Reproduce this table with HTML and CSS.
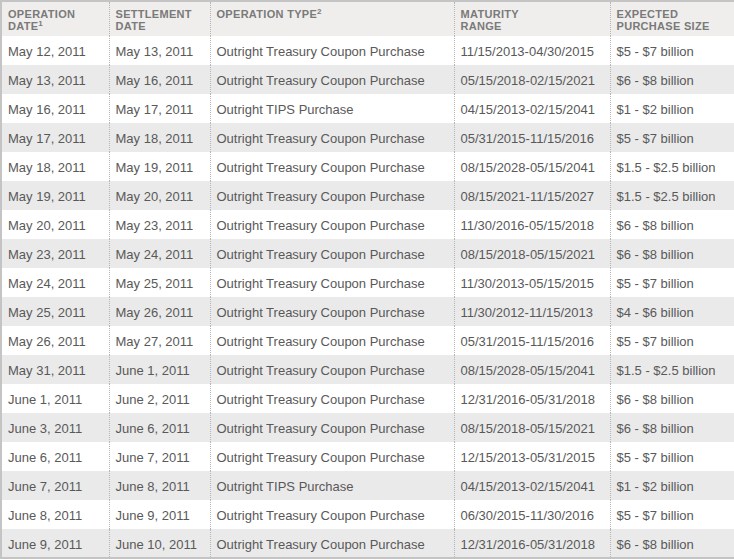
FILE: index.html
```html
<!DOCTYPE html>
<html>
<head>
<meta charset="utf-8">
<link rel="stylesheet" href="styles.css">
</head>
<body>
<table class="ops">
  <colgroup>
    <col class="c1"><col class="c2"><col class="c3"><col class="c4"><col class="c5">
  </colgroup>
  <thead>
    <tr>
      <th>Operation<br>Date<sup>1</sup></th>
      <th>Settlement<br>Date</th>
      <th>Operation Type<sup>2</sup></th>
      <th>Maturity<br>Range</th>
      <th>Expected<br>Purchase Size</th>
    </tr>
  </thead>
  <tbody>
    <tr><td>May 12, 2011</td><td>May 13, 2011</td><td>Outright Treasury Coupon Purchase</td><td>11/15/2013-04/30/2015</td><td>$5 - $7 billion</td></tr>
    <tr><td>May 13, 2011</td><td>May 16, 2011</td><td>Outright Treasury Coupon Purchase</td><td>05/15/2018-02/15/2021</td><td>$6 - $8 billion</td></tr>
    <tr><td>May 16, 2011</td><td>May 17, 2011</td><td>Outright TIPS Purchase</td><td>04/15/2013-02/15/2041</td><td>$1 - $2 billion</td></tr>
    <tr><td>May 17, 2011</td><td>May 18, 2011</td><td>Outright Treasury Coupon Purchase</td><td>05/31/2015-11/15/2016</td><td>$5 - $7 billion</td></tr>
    <tr><td>May 18, 2011</td><td>May 19, 2011</td><td>Outright Treasury Coupon Purchase</td><td>08/15/2028-05/15/2041</td><td>$1.5 - $2.5 billion</td></tr>
    <tr><td>May 19, 2011</td><td>May 20, 2011</td><td>Outright Treasury Coupon Purchase</td><td>08/15/2021-11/15/2027</td><td>$1.5 - $2.5 billion</td></tr>
    <tr><td>May 20, 2011</td><td>May 23, 2011</td><td>Outright Treasury Coupon Purchase</td><td>11/30/2016-05/15/2018</td><td>$6 - $8 billion</td></tr>
    <tr><td>May 23, 2011</td><td>May 24, 2011</td><td>Outright Treasury Coupon Purchase</td><td>08/15/2018-05/15/2021</td><td>$6 - $8 billion</td></tr>
    <tr><td>May 24, 2011</td><td>May 25, 2011</td><td>Outright Treasury Coupon Purchase</td><td>11/30/2013-05/15/2015</td><td>$5 - $7 billion</td></tr>
    <tr><td>May 25, 2011</td><td>May 26, 2011</td><td>Outright Treasury Coupon Purchase</td><td>11/30/2012-11/15/2013</td><td>$4 - $6 billion</td></tr>
    <tr><td>May 26, 2011</td><td>May 27, 2011</td><td>Outright Treasury Coupon Purchase</td><td>05/31/2015-11/15/2016</td><td>$5 - $7 billion</td></tr>
    <tr><td>May 31, 2011</td><td>June 1, 2011</td><td>Outright Treasury Coupon Purchase</td><td>08/15/2028-05/15/2041</td><td>$1.5 - $2.5 billion</td></tr>
    <tr><td>June 1, 2011</td><td>June 2, 2011</td><td>Outright Treasury Coupon Purchase</td><td>12/31/2016-05/31/2018</td><td>$6 - $8 billion</td></tr>
    <tr><td>June 3, 2011</td><td>June 6, 2011</td><td>Outright Treasury Coupon Purchase</td><td>08/15/2018-05/15/2021</td><td>$6 - $8 billion</td></tr>
    <tr><td>June 6, 2011</td><td>June 7, 2011</td><td>Outright Treasury Coupon Purchase</td><td>12/15/2013-05/31/2015</td><td>$5 - $7 billion</td></tr>
    <tr><td>June 7, 2011</td><td>June 8, 2011</td><td>Outright TIPS Purchase</td><td>04/15/2013-02/15/2041</td><td>$1 - $2 billion</td></tr>
    <tr><td>June 8, 2011</td><td>June 9, 2011</td><td>Outright Treasury Coupon Purchase</td><td>06/30/2015-11/30/2016</td><td>$5 - $7 billion</td></tr>
    <tr><td>June 9, 2011</td><td>June 10, 2011</td><td>Outright Treasury Coupon Purchase</td><td>12/31/2016-05/31/2018</td><td>$6 - $8 billion</td></tr>
  </tbody>
</table>
</body>
</html>
```
FILE: styles.css
```css
html, body {
  margin: 0;
  padding: 0;
  background: #ffffff;
}
.ops {
  width: 734px;
  table-layout: fixed;
  border-collapse: collapse;
  border: 2px solid #c4c4c4;
  font-family: "Liberation Sans", Arial, sans-serif;
}
.c1 { width: 108px; }
.c2 { width: 101px; }
.c3 { width: 244px; }
.c4 { width: 156px; }
.c5 { width: 125px; }
.ops th {
  background: #efeeec;
  color: #7a7a7a;
  font-size: 11px;
  font-weight: bold;
  letter-spacing: 0.3px;
  text-transform: uppercase;
  text-align: left;
  vertical-align: top;
  line-height: 12px;
  height: 35px;
  box-sizing: border-box;
  padding: 6px 6px 0 6px;
  border-left: 1px dotted #b5b5b5;
  white-space: nowrap;
}
.ops sup {
  font-size: 8px;
  line-height: 0;
  vertical-align: 4px;
  letter-spacing: 0;
}
.ops td {
  color: #595959;
  font-size: 13px;
  height: 29px;
  box-sizing: border-box;
  padding: 2px 6px 0 6px;
  vertical-align: middle;
  border-left: 1px dotted #b5b5b5;
  white-space: nowrap;
}
.ops th:first-child, .ops td:first-child {
  border-left: none;
}
.ops tbody tr:nth-child(odd) td { background: #ffffff; }
.ops tbody tr:nth-child(even) td { background: #eaeaea; }
```
